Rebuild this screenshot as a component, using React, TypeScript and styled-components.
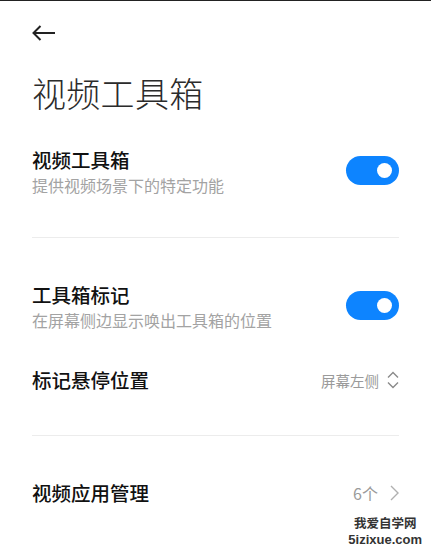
import React from "react";
import styled, { createGlobalStyle } from "styled-components";

const Global = createGlobalStyle`
  html, body {
    margin: 0;
    padding: 0;
    background: #ffffff;
  }
  body {
    font-family: "Noto Sans CJK SC", "Noto Sans", sans-serif;
    color: #000;
  }
`;

const Page = styled.div`
  position: relative;
  width: 431px;
  height: 551px;
  overflow: hidden;
  background: #fff;
  border-top: 1px solid #222;
  box-sizing: border-box;
`;

const Header = styled.div`
  height: 64px;
  padding: 0 32px;
  display: flex;
  align-items: center;
`;

const BackButton = styled.button`
  border: none;
  background: none;
  padding: 0;
  width: 28px;
  height: 20px;
  display: flex;
  align-items: center;
  color: #222;
  svg {
    display: block;
  }
`;

const Title = styled.h1`
  margin: 6px 0 0;
  padding: 0 32px;
  font-size: 34px;
  line-height: 44px;
  font-weight: 300;
  color: #2b2b2b;
  letter-spacing: 0.3px;
`;

const Content = styled.div`
  padding: 0 32px;
`;

const Row = styled.div<{ $top: number; $height?: number }>`
  margin-top: ${(p) => p.$top}px;
  ${(p) => (p.$height ? `height: ${p.$height}px;` : "")}
  display: flex;
  align-items: center;
  justify-content: space-between;
`;

const TextBlock = styled.div`
  display: flex;
  flex-direction: column;
`;

const RowTitle = styled.div`
  font-size: 19.5px;
  line-height: 26px;
  font-weight: 500;
  color: #111;
`;

const RowSub = styled.div`
  font-size: 16px;
  line-height: 24px;
  color: #a3a3a3;
`;

const Divider = styled.div<{ $top: number }>`
  margin-top: ${(p) => p.$top}px;
  height: 1px;
  background: #ececec;
`;

const Toggle = styled.div<{ $on: boolean }>`
  width: 53px;
  height: 29px;
  border-radius: 15px;
  background: ${(p) => (p.$on ? "#0d84ff" : "#ddd")};
  display: flex;
  align-items: center;
  justify-content: ${(p) => (p.$on ? "flex-end" : "flex-start")};
  padding: 0 7px;
  box-sizing: border-box;
  margin-top: -4px;
  &::after {
    content: "";
    width: 15px;
    height: 15px;
    border-radius: 50%;
    background: #fff;
  }
`;

const Value = styled.div<{ $gap: number; $size: number }>`
  display: flex;
  align-items: center;
  gap: ${(p) => p.$gap}px;
  font-size: ${(p) => p.$size}px;
  color: #9a9a9a;
  svg {
    display: block;
  }
`;

const Watermark = styled.div`
  position: absolute;
  right: 9px;
  bottom: 4px;
  display: flex;
  flex-direction: column;
  align-items: center;
  gap: 2px;
  font-weight: 700;
  color: #333;
`;

const MarkCn = styled.span`
  font-family: "Noto Sans CJK SC", sans-serif;
  font-size: 12.5px;
  line-height: 14px;
`;

const MarkEn = styled.span`
  font-family: "Liberation Sans", Arial, sans-serif;
  font-size: 13px;
  line-height: 15px;
`;

function ArrowLeft() {
  return (
    <svg width="24" height="16" viewBox="0 0 24 16" fill="none">
      <path d="M1.5 8H23" stroke="#222" strokeWidth="2" />
      <path d="M8.5 1L1.5 8L8.5 15" stroke="#222" strokeWidth="2" strokeLinejoin="miter" />
    </svg>
  );
}

function UpDown() {
  return (
    <svg width="12" height="18" viewBox="0 0 12 18" fill="none">
      <path d="M1 6.5L6 1.5L11 6.5" stroke="#8a8a8a" strokeWidth="1.4" />
      <path d="M1 11.5L6 16.5L11 11.5" stroke="#8a8a8a" strokeWidth="1.4" />
    </svg>
  );
}

function ChevronRight() {
  return (
    <svg width="9" height="16" viewBox="0 0 9 16" fill="none">
      <path d="M1 1L8 8L1 15" stroke="#b0b0b0" strokeWidth="1.4" />
    </svg>
  );
}

export default function App() {
  return (
    <>
      <Global />
      <Page>
        <Header>
          <BackButton aria-label="返回">
            <ArrowLeft />
          </BackButton>
        </Header>
        <Title>视频工具箱</Title>
        <Content>
          <Row $top={32}>
            <TextBlock>
              <RowTitle>视频工具箱</RowTitle>
              <RowSub>提供视频场景下的特定功能</RowSub>
            </TextBlock>
            <Toggle $on />
          </Row>
          <Divider $top={40} />
          <Row $top={44}>
            <TextBlock>
              <RowTitle>工具箱标记</RowTitle>
              <RowSub>在屏幕侧边显示唤出工具箱的位置</RowSub>
            </TextBlock>
            <Toggle $on />
          </Row>
          <Row $top={20} $height={56}>
            <RowTitle>标记悬停位置</RowTitle>
            <Value $gap={8} $size={14.5}>
              屏幕左侧
              <UpDown />
            </Value>
          </Row>
          <Divider $top={27} />
          <Row $top={29} $height={56}>
            <RowTitle>视频应用管理</RowTitle>
            <Value $gap={12} $size={16}>
              6个
              <ChevronRight />
            </Value>
          </Row>
        </Content>
        <Watermark>
          <MarkCn>我爱自学网</MarkCn>
          <MarkEn>5izixue.com</MarkEn>
        </Watermark>
      </Page>
    </>
  );
}
